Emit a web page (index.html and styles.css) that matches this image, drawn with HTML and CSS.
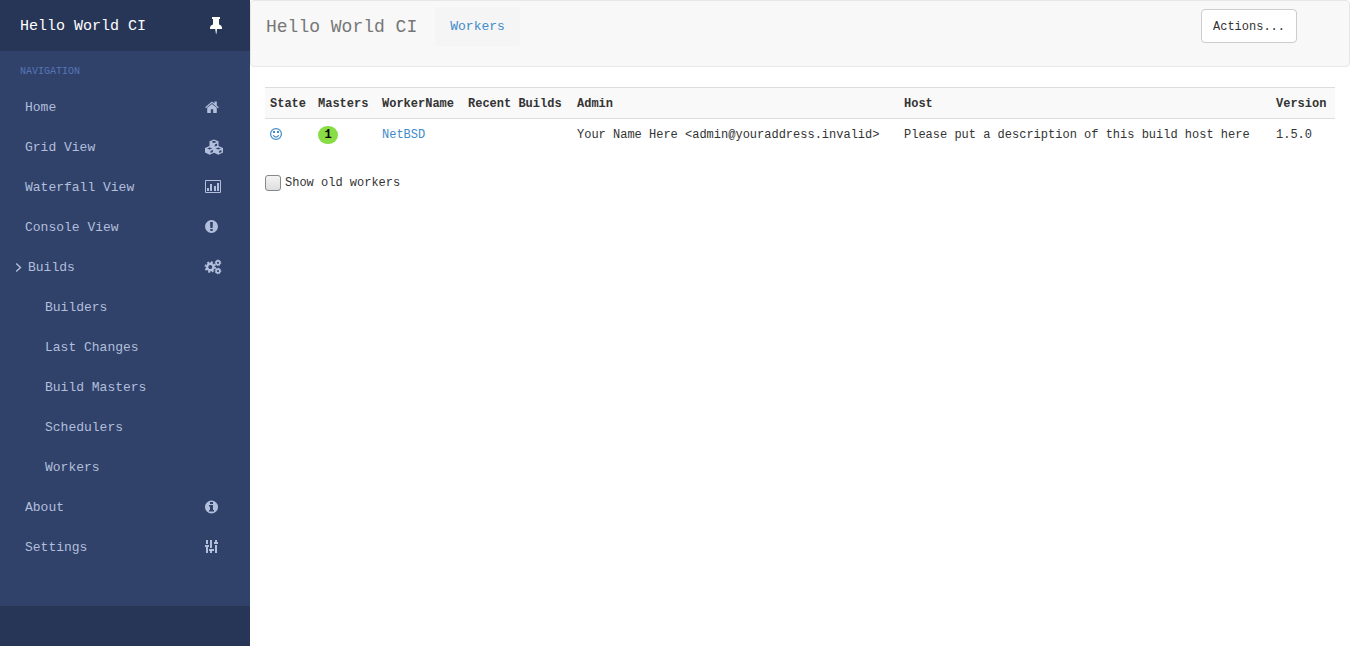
FILE: index.html
```html
<!DOCTYPE html>
<html lang="en">
<head>
<meta charset="utf-8">
<title>Hello World CI</title>
<link rel="stylesheet" href="styles.css">
</head>
<body>
<div class="app">
  <aside class="sidebar">
    <header class="brand">
      <a href="#">Hello World CI</a>
      <button class="pin" type="button" aria-label="Pin sidebar">
        <svg width="18" height="18" viewBox="0 0 18 18" fill="currentColor"><path d="M5 0h8v2h-1v5.500c1.800.6 3 1.900 3 3.500v1h-5l-.6 5H9l-.8-5H3v-1c0-1.600 1.200-2.900 3-3.500V2H5z"/></svg>
      </button>
    </header>
    <nav class="nav">
      <h2 class="nav-title">NAVIGATION</h2>
      <a class="item" href="#">Home
        <svg class="icon" viewBox="0 0 20 14" fill="currentColor"><path d="M2.200 7.800 7 3.900l4.800 3.900v4.700a.5.5 0 0 1-.5.5H8.200V9.300H5.800V13H2.700a.5.500 0 0 1-.5-.5z"/><path d="M.2 7.300 6.300 2a1.100 1.100 0 0 1 1.400 0L9.500 3.500V1.500h2.300v4L13.800 7.300l-.7.900L7 3.100.900 8.200z"/></svg>
      </a>
      <a class="item" href="#">Grid View
        <svg class="icon" viewBox="0 0 20 14" fill="currentColor" fill-rule="evenodd"><path d="M9-.5l4.500 1.700v4.900L18 8v4.600L13.400 14.700 9 12.700l-4.400 2L0 12.600V8l4.500-1.900V1.200zM9 .8 6.400 1.900 9 3l2.600-1.100zM9.800 4.500v2.100l2.300-.9V3.500zM4.700 7.400 2.100 8.500l2.600 1.100 2.600-1.100zM5.500 11v2.100l2.400-1.100V9.900zM13.300 7.400l-2.600 1.100 2.600 1.100 2.600-1.100zM14.100 11v2.100l2.400-1.100V9.900z"/></svg>
      </a>
      <a class="item" href="#">Waterfall View
        <svg class="icon" viewBox="0 0 20 14" fill="currentColor" fill-rule="evenodd"><path d="M1 0h14a1 1 0 0 1 1 1v11a1 1 0 0 1-1 1H1a1 1 0 0 1-1-1V1a1 1 0 0 1 1-1zM1 1v11h14V1zM2 8h2v3H2zM5 4h2v7H5zM9 6h2v5H9zM12 3h2v8h-2z"/></svg>
      </a>
      <a class="item" href="#">Console View
        <svg class="icon" viewBox="0 0 20 14" fill="currentColor" fill-rule="evenodd"><path d="M6.500 0a6.500 6.500 0 1 1 0 13 6.500 6.500 0 0 1 0-13zM5.100 2l.3 6h2.200l.3-6zM5.300 9v2h2.400V9z"/></svg>
      </a>
      <a class="item group" href="#"><span class="group-label"><svg class="chevron" width="7" height="10" viewBox="0 0 7 10" fill="none" stroke="currentColor" stroke-width="1.400"><path d="M1.200 .5 5.500 4.500 1.200 8.500"/></svg>Builds</span>
        <svg class="icon" viewBox="0 0 20 14" fill="none" stroke="currentColor"><circle cx="5.300" cy="7" r="3.200" stroke-width="2.400"/><circle cx="5.300" cy="7" r="4.800" stroke-width="1.800" stroke-dasharray="1.950 1.820"/><circle cx="13" cy="2.800" r="1.900" stroke-width="1.600"/><circle cx="13" cy="2.800" r="2.800" stroke-width="1" stroke-dasharray="1.150 1.049"/><circle cx="13" cy="11" r="1.900" stroke-width="1.600"/><circle cx="13" cy="11" r="2.800" stroke-width="1" stroke-dasharray="1.150 1.049"/></svg>
      </a>
      <a class="item sub" href="#">Builders</a>
      <a class="item sub" href="#">Last Changes</a>
      <a class="item sub" href="#">Build Masters</a>
      <a class="item sub" href="#">Schedulers</a>
      <a class="item sub" href="#">Workers</a>
      <a class="item" href="#">About
        <svg class="icon" viewBox="0 0 20 14" fill="currentColor" fill-rule="evenodd"><path d="M6.500.5a6.500 6.500 0 1 1 0 13 6.500 6.500 0 0 1 0-13zM5 2v2h3V2zM4 5v1.500h1V10H4v1.500h5V10H8V5z"/></svg>
      </a>
      <a class="item" href="#">Settings
        <svg class="icon" viewBox="0 0 20 14" fill="currentColor"><path d="M1 0h2v4H1zM0 5h4v2H0zM1 7h2v6H1zM5 0h2v8H5zM4 9h5v2H4zM5 11h2v2H5zM10 0h2v2h-2zM9 2h4v2H9zM10 5h2v8h-2z"/></svg>
      </a>
    </nav>
    <footer class="sidebar-foot"></footer>
  </aside>

  <main class="content">
    <header class="topbar">
      <h1 class="title">Hello World CI</h1>
      <a class="crumb" href="#">Workers</a>
      <button class="actions" type="button">Actions...</button>
    </header>
    <section class="page">
      <table class="workers">
        <colgroup>
          <col class="c-state"><col class="c-masters"><col class="c-name"><col class="c-builds"><col class="c-admin"><col><col class="c-version">
        </colgroup>
        <thead>
          <tr><th>State</th><th>Masters</th><th>WorkerName</th><th>Recent Builds</th><th>Admin</th><th>Host</th><th>Version</th></tr>
        </thead>
        <tbody>
          <tr>
            <td><a href="#" aria-label="Connected"><svg class="smile" width="12" height="12" viewBox="0 0 12 12" fill="none" stroke="currentColor" stroke-width="1.200"><circle cx="6" cy="6" r="5.400"/><path d="M3.300 7.300q.8 1.800 2.700 1.800t2.700-1.800"/><path stroke="none" fill="currentColor" d="M3 3h2v2H3zM7 3h2v2H7z"/></svg></a></td>
            <td><span class="badge">1</span></td>
            <td><a href="#">NetBSD</a></td>
            <td></td>
            <td>Your Name Here &lt;admin@youraddress.invalid&gt;</td>
            <td>Please put a description of this build host here</td>
            <td>1.5.0</td>
          </tr>
        </tbody>
      </table>
      <label class="old"><input type="checkbox">Show old workers</label>
    </section>
  </main>
</div>
</body>
</html>
```
FILE: styles.css
```css
* { box-sizing: border-box; }

body {
  margin: 0;
  font: 12px/20px "Liberation Mono", monospace;
  color: #333;
  background: #fff;
}

a { color: #428bca; text-decoration: none; }
button, input { font: inherit; margin: 0; }

.app { display: flex; min-height: 100vh; }

.sidebar {
  display: flex;
  flex-direction: column;
  flex: 0 0 250px;
  background: #30426a;
}
.brand {
  display: flex;
  align-items: center;
  justify-content: space-between;
  height: 51px;
  padding: 2px 25px 0 20px;
  background: #273657;
  font-size: 15px;
}
.brand a { color: #fff; }
.pin {
  display: flex;
  padding: 0;
  margin-bottom: 2px;
  border: 0;
  background: none;
  color: #fff;
}

.nav { display: flex; flex-direction: column; flex: 1; }
.nav-title {
  margin: 0;
  padding: 11px 20px 5px;
  font-size: 10px;
  font-weight: normal;
  color: #5675b8;
}
.item {
  display: flex;
  align-items: center;
  justify-content: space-between;
  height: 40px;
  padding: 2px 25px 0;
  font-size: 13px;
  color: #b2bfdc;
}
.group { padding-left: 15px; }
.group-label { display: flex; align-items: center; gap: 6px; }
.sub { padding-left: 45px; }
.icon { width: 20px; height: 14px; margin-bottom: 2px; overflow: visible; }
.sidebar-foot { height: 40px; background: #273657; }

.content { flex: 1; min-width: 0; }
.topbar {
  display: flex;
  align-items: flex-start;
  height: 67px;
  padding: 6px 52px 0 15px;
  border: 1px solid #e7e7e7;
  border-radius: 4px;
  background: #f8f8f8;
}
.title {
  margin: 0;
  font-size: 18px;
  font-weight: normal;
  line-height: 40px;
  color: #777;
}
.crumb {
  margin-left: 18px;
  padding: 1px 15px 0;
  border-radius: 4px;
  background: #f5f5f5;
  font-size: 13px;
  line-height: 38px;
}
.actions {
  height: 34px;
  margin: 2px 0 0 auto;
  padding: 2px 11px 0;
  border: 1px solid #ccc;
  border-radius: 4px;
  background: #fff;
  color: #333;
}

.page { padding: 20px 15px; }
.workers {
  width: 100%;
  margin-bottom: 24px;
  table-layout: fixed;
  border-collapse: collapse;
}
.c-state { width: 48px; }
.c-masters { width: 64px; }
.c-name { width: 86px; }
.c-builds { width: 109px; }
.c-admin { width: 327px; }
.c-version { width: 64px; }
.workers th,
.workers td { padding: 6px 5px 4px; text-align: left; white-space: nowrap; }
.workers th {
  border-top: 1px solid #ddd;
  border-bottom: 1px solid #ddd;
  background: #f9f9f9;
}
.smile { display: block; margin-bottom: 2px; }
.badge {
  display: block;
  width: 20px;
  height: 18px;
  border-radius: 9px;
  background: #8d4;
  color: #000;
  font-weight: bold;
  line-height: 18px;
  text-align: center;
}

.old { display: inline-flex; align-items: center; gap: 4px; }
.old input {
  appearance: none;
  width: 16px;
  height: 16px;
  border: 1px solid #888;
  border-radius: 3px;
  background: linear-gradient(#f4f4f4, #dedede);
}
```
